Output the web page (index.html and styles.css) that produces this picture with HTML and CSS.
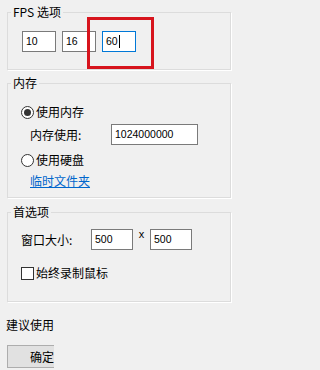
FILE: index.html
```html
<!DOCTYPE html>
<html lang="zh-CN">
<head>
<meta charset="utf-8">
<link rel="stylesheet" href="styles.css">
</head>
<body>
<div class="dialog">
  <fieldset class="group g-fps">
    <legend>FPS 选项</legend>
    <div class="fps-row">
      <div class="field f-fps">10</div>
      <div class="field f-fps">16</div>
      <div class="field f-fps focus">60<span class="caret"></span></div>
    </div>
  </fieldset>

  <fieldset class="group g-mem">
    <legend>内存</legend>
    <div class="mem-body">
      <div class="option"><span class="radio checked"></span><span>使用内存</span></div>
      <div class="mem-row"><span class="mem-label">内存使用:</span><div class="field f-mem">1024000000</div></div>
      <div class="option opt-disk"><span class="radio"></span><span>使用硬盘</span></div>
      <a class="link">临时文件夹</a>
    </div>
  </fieldset>

  <fieldset class="group g-pref">
    <legend>首选项</legend>
    <div class="pref-body">
      <div class="size-row">
        <span class="size-label">窗口大小:</span>
        <div class="field f-size">500</div>
        <span class="times">x</span>
        <div class="field f-size">500</div>
      </div>
      <div class="option opt-check"><span class="check"></span><span>始终录制鼠标</span></div>
    </div>
  </fieldset>

  <div class="note">建议使用</div>
  <div class="btn-clip"><button class="btn">确定</button></div>

  <div class="highlight"></div>
</div>
</body>
</html>
```

FILE: styles.css
```css
html, body {
  margin: 0;
  padding: 0;
  background: #f0f0f0;
}
body {
  font-family: "Noto Sans CJK SC", "Noto Sans", sans-serif;
  font-size: 12px;
  line-height: 16px;
  color: #000;
  width: 241px;
  height: 370px;
  overflow: hidden;
}
.dialog {
  position: relative;
  width: 241px;
  height: 370px;
  display: flex;
  flex-direction: column;
  align-items: flex-start;
}
.group {
  box-sizing: border-box;
  width: 224px;
  margin: 0 0 0 7px;
  padding: 0;
  border: 1px solid #dcdcdc;
  box-shadow: 1px 1px 0 #ffffff;
  min-width: 0;
}
.group legend {
  padding: 0 2px;
  margin-left: 3px;
  line-height: 16px;
  font-size: 12px;
}
.g-fps { margin-top: 4px; }
.g-mem { margin-top: 5px; }
.g-pref { margin-top: 6px; }

.field {
  box-sizing: border-box;
  height: 21px;
  background: #fff;
  border: 1px solid #7a7a7a;
  font-family: "Liberation Sans", Arial, sans-serif;
  font-size: 10.5px;
  line-height: 19px;
  padding-left: 3px;
  display: flex;
  align-items: center;
}
.field.focus {
  border-color: #0078d7;
}
.caret {
  display: inline-block;
  width: 1px;
  height: 13px;
  background: #000;
  margin-left: 1px;
}

.fps-row {
  display: flex;
  gap: 6px;
  padding: 11px 0 17px 14px;
}
.f-fps { width: 34px; }

.mem-body {
  display: flex;
  flex-direction: column;
  align-items: flex-start;
  padding: 13px 0 8px 13px;
}
.option {
  display: flex;
  align-items: center;
  gap: 2px;
  height: 16px;
}
.radio {
  box-sizing: border-box;
  width: 13px;
  height: 13px;
  border: 1px solid #333;
  border-radius: 50%;
  background: #fff;
  display: flex;
  align-items: center;
  justify-content: center;
}
.radio.checked::after {
  content: "";
  width: 7px;
  height: 7px;
  border-radius: 50%;
  background: #333;
}
.mem-row {
  display: flex;
  align-items: center;
  margin-top: 4px;
  padding-left: 9px;
}
.mem-label { width: 81px; }
.f-mem { width: 87px; }
.opt-disk { margin-top: 7px; }
.link {
  margin-top: 5px;
  margin-left: 9px;
  color: #0066cc;
  text-decoration: underline;
  line-height: 16px;
}

.pref-body {
  display: flex;
  flex-direction: column;
  align-items: flex-start;
  padding: 9px 0 20px 13px;
}
.size-row {
  display: flex;
  align-items: center;
}
.size-label { width: 70px; }
.f-size { width: 42px; }
.times {
  width: 17px;
  text-align: center;
  align-self: flex-start;
  font-family: "Liberation Sans", Arial, sans-serif;
  font-size: 11px;
  line-height: 10px;
}
.check {
  box-sizing: border-box;
  width: 13px;
  height: 13px;
  border: 1px solid #333;
  background: #fff;
}
.opt-check { margin-top: 15px; }

.note {
  margin: 15px 0 0 6px;
  line-height: 16px;
}
.btn-clip {
  margin: 12px 0 0 7px;
  width: 47px;
  height: 23px;
  overflow: hidden;
}
.btn {
  box-sizing: border-box;
  width: 70px;
  height: 23px;
  margin: 0;
  padding: 0;
  border: 1px solid #adadad;
  background: #e1e1e1;
  font-family: "Noto Sans CJK SC", sans-serif;
  font-size: 12px;
  line-height: 16px;
  color: #000;
}

.highlight {
  position: absolute;
  left: 87px;
  top: 17px;
  width: 67px;
  height: 52px;
  box-sizing: border-box;
  border: 3px solid #d7141d;
}
```
